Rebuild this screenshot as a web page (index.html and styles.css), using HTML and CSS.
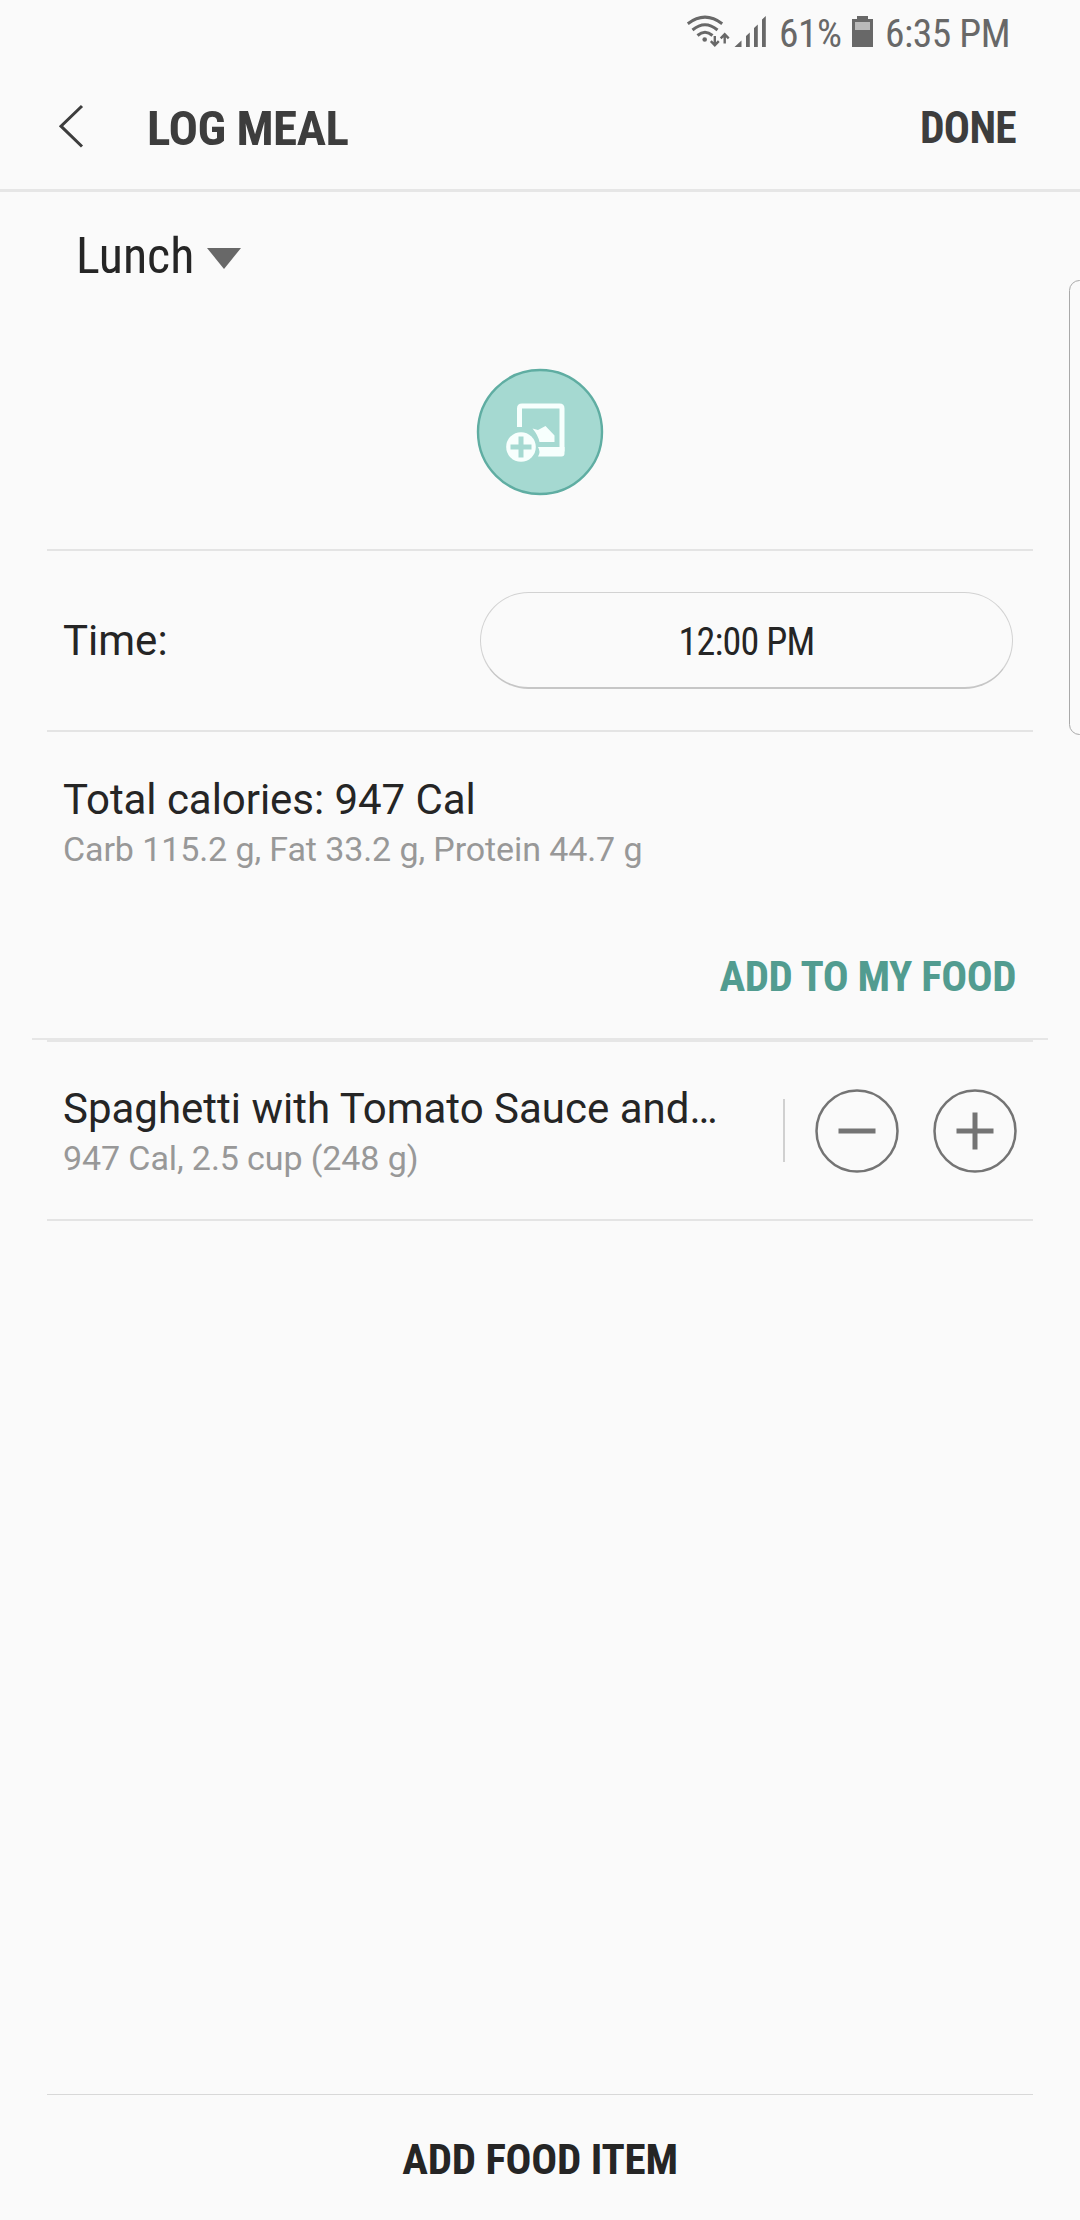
FILE: index.html
```html
<!DOCTYPE html>
<html lang="en">
<head>
<meta charset="utf-8">
<title>Log meal</title>
<link rel="stylesheet" href="styles.css">
</head>
<body>
<main class="screen">
  <div class="status-bar">
    <svg class="wifi" width="44" height="34" viewBox="686 14 44 34" fill="none" stroke="#686868" stroke-width="3">
      <path d="M687.8 23.7Q705 10.500 722.200 23.700M692.500 30Q705 19.500 717.500 30M697.500 35.500Q705 29 712.500 35.500"/>
      <circle cx="704.700" cy="39.500" r="2.300" fill="#686868" stroke="none"/>
      <path d="M714.800 36v9M710.800 41.200l4 4 4-4M724.700 43.500v-9M720.700 38.300l4-4 4 4" stroke-width="2.400"/>
    </svg>
    <svg class="signal" width="32" height="32" viewBox="734 16 32 32" fill="#686868">
      <path d="M734.500 47l7-6.500V47zM746 36l3.800-3.500V47H746zM754 28l3.800-3.500V47H754zM762 19.500l3.800-3.500V47H762z"/>
    </svg>
    <span class="percent">61%</span>
    <svg class="battery" width="22" height="32" viewBox="852 16 22 32">
      <path d="M857 16h11v3h5v28h-21V19h5z" fill="#686868"/>
      <path d="M855 22h15v8h-15z" fill="#b9b9b9"/>
    </svg>
    <span class="clock">6:35 PM</span>
  </div>

  <header class="app-bar">
    <svg class="back" width="26" height="44" viewBox="58 104 26 44" fill="none" stroke="#3d3d3d" stroke-width="3">
      <path d="M82 106L61 126.200 82 146.500"/>
    </svg>
    <h1 class="title">LOG MEAL</h1>
    <span class="done">DONE</span>
  </header>

  <section class="meal">
    <div class="meal-type">
      <span class="meal-name">Lunch</span>
      <svg width="34" height="21" viewBox="0 0 34 21"><path d="M0 0h34L17 21z" fill="#686868"/></svg>
    </div>
    <svg class="photo" width="128" height="128" viewBox="476 368.500 128 128">
      <circle cx="540" cy="432.500" r="62" fill="#a5d9d1" stroke="#5fada2" stroke-width="2.400"/>
      <path d="M519.500 427.500V409q0-2.500 2.500-2.500h37.500q2.500 0 2.500 2.500v43" fill="none" stroke="#f7fffd" stroke-width="5"/>
      <path d="M538 447.500h26.500v6.500q0 3-3 3H538q3-4.500 0-9.500z" fill="#f7fffd"/>
      <path d="M532.500 429l5.500 1.500 7.500-4 9 9.500v6.500h-15q-1.500-7-7-13.500z" fill="#f7fffd"/>
      <circle cx="521" cy="447.500" r="14.800" fill="#f7fffd"/>
      <path d="M510.500 447.500h21M521 437v21" stroke="#a5d9d1" stroke-width="5"/>
    </svg>
  </section>

  <section class="time-row">
    <span class="primary">Time:</span>
    <span class="time-pill">12:00 PM</span>
  </section>

  <section class="summary">
    <div class="primary">Total calories: 947 Cal</div>
    <div class="secondary">Carb 115.2 g, Fat 33.2 g, Protein 44.7 g</div>
    <div class="add-my-food">ADD TO MY FOOD</div>
  </section>

  <section class="food-list">
    <div class="food-item">
      <div class="food-text">
        <div class="primary">Spaghetti with Tomato Sauce and…</div>
        <div class="secondary">947 Cal, 2.5 cup (248 g)</div>
      </div>
      <div class="stepper">
        <svg width="84" height="84" viewBox="-42 -42 84 84" fill="none" stroke="#747474">
          <circle r="40.500" stroke-width="2.500"/><path d="M-18.500 0h37" stroke-width="5"/>
        </svg>
        <svg width="84" height="84" viewBox="-42 -42 84 84" fill="none" stroke="#747474">
          <circle r="40.500" stroke-width="2.500"/><path d="M-18.500 0h37M0-18.500v37" stroke-width="5"/>
        </svg>
      </div>
    </div>
  </section>

  <footer class="footer">ADD FOOD ITEM</footer>
  <div class="edge-handle"></div>
</main>
</body>
</html>
```
FILE: styles.css
```css
* { box-sizing: border-box; }

body {
  margin: 0;
  background: #fafafa;
  color: #252525;
  font-family: Roboto, "Liberation Sans", sans-serif;
}

.screen {
  position: relative;
  display: flex;
  flex-direction: column;
  width: 1080px;
  height: 2220px;
  overflow: hidden;
  white-space: nowrap;
}

.status-bar, .title, .done, .meal-name, .time-pill, .add-my-food, .footer {
  font-family: "Roboto Condensed", Roboto, "Liberation Sans Narrow", sans-serif;
  font-stretch: 75%;
}

.status-bar {
  display: flex;
  height: 66px;
  padding-left: 686px;
  color: #686868;
  font-size: 39.500px;
  line-height: 67px;
  letter-spacing: -0.500px;
}
.wifi { margin-top: 14px; }
.signal { margin: 16px 0 0 4px; }
.percent { width: 73px; margin-left: 13px; }
.battery { margin-top: 16px; }
.clock { margin-left: 11px; }

.app-bar {
  display: flex;
  align-items: center;
  height: 126px;
  padding: 2px 64px 0 58px;
  border-bottom: 3px solid #e6e6e6;
  color: #3d3d3d;
}
.back { margin-top: -5px; }
.title {
  margin: 0 auto 0 63px;
  font-size: 49px;
  font-weight: 700;
  letter-spacing: -0.500px;
}
.done {
  font-size: 43.500px;
  font-weight: 700;
  letter-spacing: -0.700px;
}

.meal {
  height: 357px;
  padding-left: 76px;
}
.meal-type {
  display: flex;
  align-items: center;
  gap: 13px;
  height: 126px;
}
.meal-type svg { margin-top: 7px; }
.meal-name { margin-top: 2px; font-size: 50px; }
.photo { display: block; margin: 50px 0 0 400px; }

.time-row {
  display: flex;
  align-items: center;
  justify-content: space-between;
  height: 181px;
  margin: 0 47px;
  padding: 0 20px 0 16px;
  border-top: 2px solid #e4e4e4;
}
.primary { font-size: 42px; line-height: 56px; }
.secondary {
  margin-top: -2px;
  color: #989898;
  font-size: 34px;
  line-height: 46px;
  letter-spacing: -0.100px;
}
.time-pill {
  width: 533px;
  height: 97px;
  border: 1px solid #d2d2d2;
  border-bottom: 2px solid #c6c6c6;
  border-radius: 49px;
  font-size: 38px;
  line-height: 99px;
  letter-spacing: -0.800px;
  text-align: center;
}

.summary {
  height: 310px;
  margin: 0 32px;
  padding: 42px 32px 0 31px;
  border-bottom: 2px solid #e6e6e6;
  background: linear-gradient(#e4e4e4, #e4e4e4) 15px 0 / 986px 2px no-repeat;
}
.summary .primary { letter-spacing: -0.050px; }
.add-my-food {
  margin-top: 74px;
  color: #529c90;
  font-size: 43px;
  font-weight: 700;
  line-height: 60px;
  letter-spacing: -0.500px;
  text-align: right;
}

.food-list { flex: 1; margin: 0 47px; }
.food-item {
  display: flex;
  align-items: center;
  justify-content: space-between;
  height: 181px;
  padding: 0 16px;
  border-top: 2px solid #e6e6e6;
  border-bottom: 2px solid #e4e4e4;
}
.stepper {
  display: flex;
  align-items: center;
  gap: 34px;
}
.stepper::before {
  content: "";
  width: 2px;
  height: 63px;
  margin-right: -4px;
  background: #d0d0d0;
}

.footer {
  height: 126px;
  margin: 0 47px;
  border-top: 1px solid #d8d8d8;
  font-size: 43px;
  font-weight: 700;
  line-height: 129px;
  letter-spacing: -0.250px;
  text-align: center;
}

.edge-handle {
  position: absolute;
  top: 280px;
  right: -10px;
  width: 21px;
  height: 455px;
  border: 1px solid #a9a9a9;
  border-radius: 16px;
}
```
